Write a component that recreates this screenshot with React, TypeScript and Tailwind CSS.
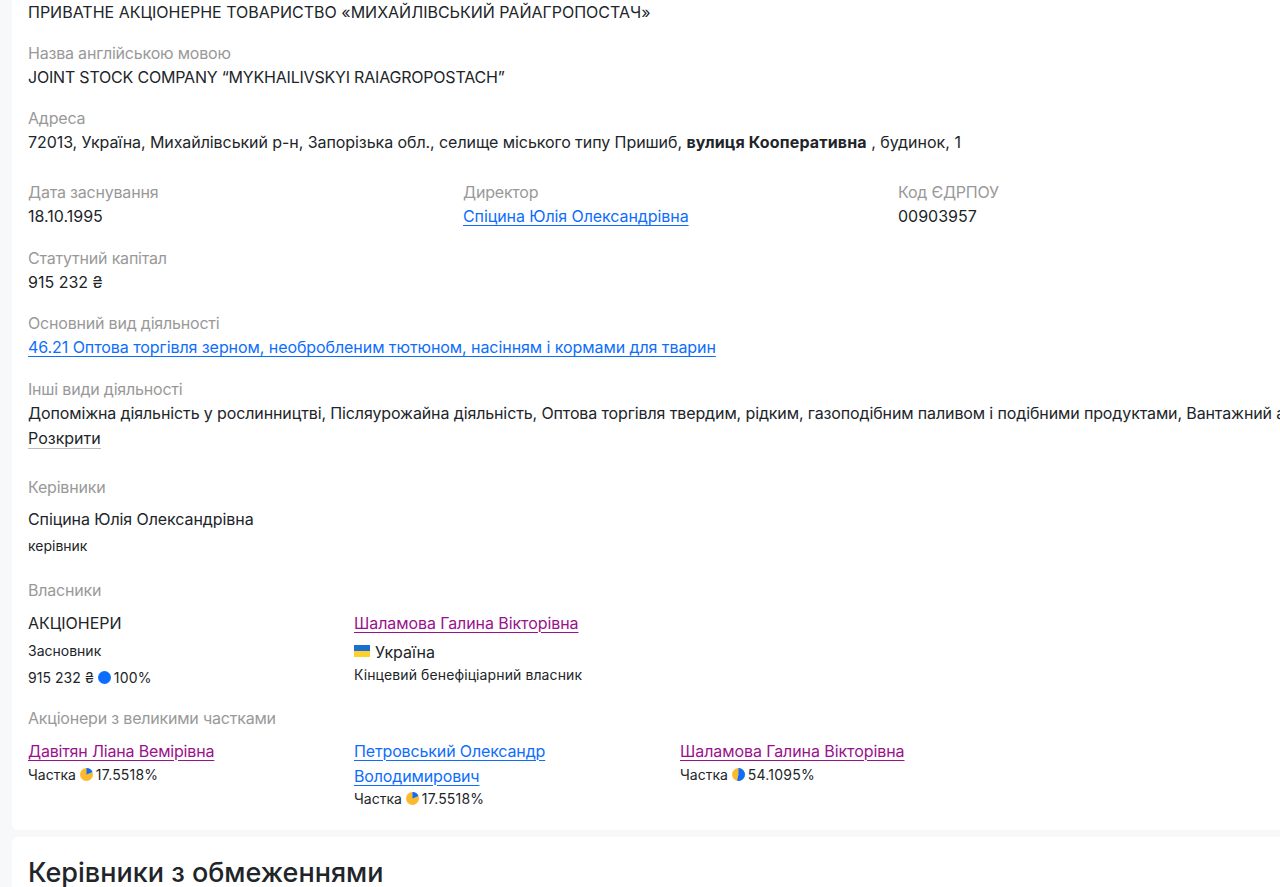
const Label = ({ children }: { children: React.ReactNode }) => (
  <div className="text-[#999] leading-[24px] tracking-[-0.2px]">{children}</div>
)

const Value = ({ children }: { children: React.ReactNode }) => (
  <div className="leading-[24.8px] whitespace-nowrap">{children}</div>
)

const Field = ({ label, children }: { label: string; children: React.ReactNode }) => (
  <div className="mb-[16.8px]">
    <Label>{label}</Label>
    <Value>{children}</Value>
  </div>
)

const Pie = ({ kind }: { kind: 'small' | 'half' | 'full' }) => (
  <svg viewBox="0 0 24 24" className="inline-block w-[13px] h-[13px] ml-[1px] shrink-0">
    {kind === 'full' ? (
      <circle cx="12" cy="12" r="12" fill="#0d6efd" />
    ) : (
      <>
        <circle cx="12" cy="12" r="12" fill="#fdb92e" />
        {kind === 'small' && <path d="M12 12V0a12 12 0 0 1 11 7.2z" fill="#0d6efd" />}
        {kind === 'half' && <path d="M12 0a12 12 0 0 1 0 24c-1 0-2-.1-2.5-.3L12 12z" fill="#0d6efd" />}
      </>
    )}
  </svg>
)

const linkBlue = 'text-[#0d6efd] underline underline-offset-[3px] decoration-1'
const linkPurple = 'text-[#99128c] underline underline-offset-[3px] decoration-1'

const Share = ({ kind, value }: { kind: 'small' | 'half'; value: string }) => (
  <div className="text-[14px] leading-[21px] flex items-center gap-[3px]">
    Частка <Pie kind={kind} /> <span className="tracking-[0.2px]">{value}</span>
  </div>
)

export default function App() {
  return (
    <div
      className="h-[887px] overflow-hidden bg-[#f6f8fa] pl-3 text-[16px] text-[#212529] antialiased"
      style={{ fontFamily: 'Inter, "Noto Sans", sans-serif' }}
    >
      <div className="bg-white rounded-bl-md px-4 h-[830px] overflow-hidden">
        <div className="mb-4">
          <Value>ПРИВАТНЕ АКЦІОНЕРНЕ ТОВАРИСТВО «МИХАЙЛІВСЬКИЙ РАЙАГРОПОСТАЧ»</Value>
        </div>
        <Field label="Назва англійською мовою">
          <span className="tracking-[-0.2px]">JOINT STOCK COMPANY “MYKHAILIVSKYI RAIAGROPOSTACH”</span>
        </Field>
        <div className="mb-[24.8px]">
          <Label>Адреса</Label>
          <Value>
            <span className="tracking-[-0.07px]">
              72013, Україна, Михайлівський р-н, Запорізька обл., селище міського типу Пришиб,
            </span>{' '}
            <b className="font-bold tracking-[0.15px]">вулиця Кооперативна</b> , будинок, 1
          </Value>
        </div>
        <div className="grid grid-cols-[435px_435px_1fr]">
          <Field label="Дата заснування">18.10.1995</Field>
          <Field label="Директор">
            <a className={`${linkBlue} tracking-[-0.08px]`}>Спіцина Юлія Олександрівна</a>
          </Field>
          <Field label="Код ЄДРПОУ">00903957</Field>
        </div>
        <Field label="Статутний капітал">915 232 ₴</Field>
        <Field label="Основний вид діяльності">
          <a className={`${linkBlue} tracking-[-0.07px]`}>
            46.21 Оптова торгівля зерном, необробленим тютюном, насінням і кормами для тварин
          </a>
        </Field>
        <div className="mb-[25px]">
          <Label>Інші види діяльності</Label>
          <Value>
            <span className="tracking-[-0.12px]">
              Допоміжна діяльність у рослинництві, Післяурожайна діяльність, Оптова торгівля твердим, рідким,
              газоподібним паливом і подібними продуктами, Вантажний автомобільний транспорт
            </span>
          </Value>
          <Value>
            <span className="inline-block leading-[20px] border-b border-[#bbb]">Розкрити</span>
          </Value>
        </div>
        <Label>Керівники</Label>
        <div className="mt-[7.8px] leading-[24.8px] tracking-[-0.08px]">Спіцина Юлія Олександрівна</div>
        <div className="mt-[2px] mb-[20px] text-[14px] leading-[24px]">керівник</div>
        <Label>Власники</Label>
        <div className="mt-[8.8px] grid grid-cols-[326px_1fr] h-[92px]">
          <div>
            <div className="leading-[24.8px]">АКЦІОНЕРИ</div>
            <div className="mt-[3px] text-[14px] leading-[24px]">Засновник</div>
            <div className="mt-[3px] text-[14px] leading-[24px] flex items-center gap-[3px]">
              <span className="tracking-[0.05px]">915 232 ₴</span>
              <Pie kind="full" />
              <span className="tracking-[0.2px]">100%</span>
            </div>
          </div>
          <div>
            <a className={`${linkPurple} leading-[24.8px] tracking-[-0.08px]`}>Шаламова Галина Вікторівна</a>
            <div className="mt-[4px] leading-[24.8px] flex items-center gap-[5px]">
              <svg viewBox="0 0 16 12" className="w-[16px] h-[12px] -mt-[2px]">
                <rect width="16" height="6" fill="#1a6fd0" />
                <rect y="6" width="16" height="6" fill="#fbd22c" />
              </svg>
              Україна
            </div>
            <div className="text-[14px] leading-[21px] tracking-[0.1px]">Кінцевий бенефіціарний власник</div>
          </div>
        </div>
        <div className="mt-[3px]">
          <Label>Акціонери з великими частками</Label>
        </div>
        <div className="mt-[9px] grid grid-cols-[326px_326px_1fr]">
          <div>
            <a className={`${linkPurple} leading-[24.8px] tracking-[-0.17px]`}>Давітян Ліана Вемірівна</a>
            <Share kind="small" value="17.5518%" />
          </div>
          <div className="w-[240px]">
            <a className={`${linkBlue} leading-[24.8px] tracking-[-0.14px]`}>Петровський Олександр Володимирович</a>
            <Share kind="small" value="17.5518%" />
          </div>
          <div>
            <a className={`${linkPurple} leading-[24.8px] tracking-[-0.08px]`}>Шаламова Галина Вікторівна</a>
            <Share kind="half" value="54.1095%" />
          </div>
        </div>
      </div>
      <div className="mt-[7px] bg-white rounded-tl-md px-4 pt-[19px] h-[60px]">
        <h2 className="text-[27px] font-medium leading-[34px]">Керівники з обмеженнями</h2>
      </div>
    </div>
  )
}
